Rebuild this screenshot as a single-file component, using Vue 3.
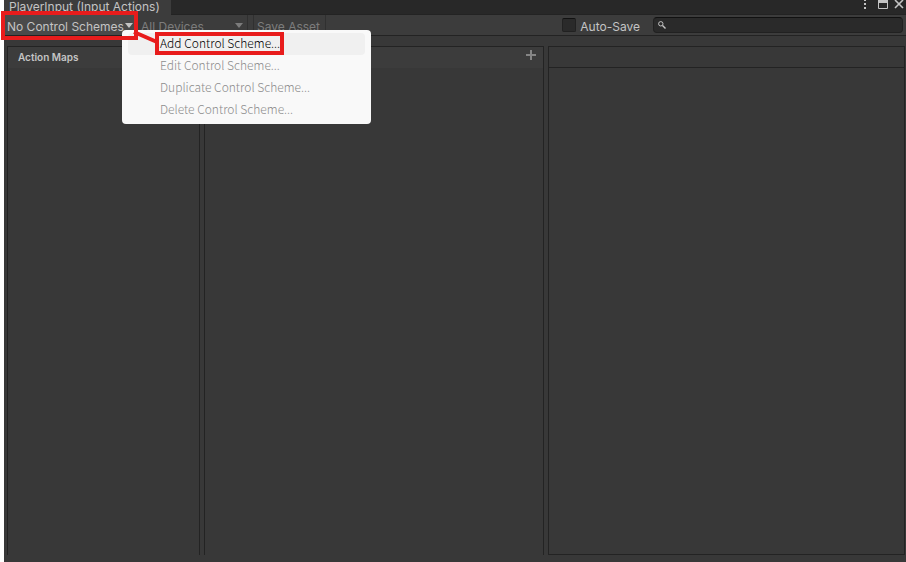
<script setup>
import { ref } from 'vue'

const scheme = ref('No Control Schemes')
const device = ref('All Devices')
const autoSave = ref(false)
const query = ref('')
const menuItems = [
  { label: 'Add Control Scheme...', enabled: true },
  { label: 'Edit Control Scheme...', enabled: false },
  { label: 'Duplicate Control Scheme...', enabled: false },
  { label: 'Delete Control Scheme...', enabled: false },
]
</script>

<template>
  <div class="window">
    <header class="titlebar">
      <div class="tab">PlayerInput (Input Actions)</div>
      <div class="window-buttons">
        <button class="icon-button" aria-label="More options">
          <svg width="8" height="12" viewBox="0 0 8 12" fill="#c4c4c4">
            <path d="M0 0h2v1H0zM0 3h2v2H0zM0 7h2v2H0z" />
          </svg>
        </button>
        <button class="icon-button" aria-label="Maximize">
          <svg width="10" height="12" viewBox="0 0 10 12" fill="none" stroke="#c4c4c4">
            <path d="M.5 0v8.500h9V0" />
            <path d="M0 1.500h10" stroke-width="3" />
          </svg>
        </button>
        <button class="icon-button" aria-label="Close">
          <svg width="10" height="12" viewBox="0 0 10 12" fill="none" stroke="#c4c4c4" stroke-width="1.600">
            <path d="M1 0l8 8M9 0L1 8" />
          </svg>
        </button>
      </div>
    </header>

    <div class="toolbar">
      <div class="dropdown schemes">
        <select v-model="scheme" aria-label="Control scheme">
          <option>No Control Schemes</option>
        </select>
        <svg class="arrow" width="8" height="5" viewBox="0 0 8 5"><path d="M0 0h8L4 5z" /></svg>
      </div>
      <div class="dropdown devices">
        <select v-model="device" aria-label="Devices" disabled>
          <option>All Devices</option>
        </select>
        <svg class="arrow" width="8" height="5" viewBox="0 0 8 5"><path d="M0 0h8L4 5z" /></svg>
      </div>
      <button class="save" disabled>Save Asset</button>
      <label class="auto-save">
        <input v-model="autoSave" type="checkbox" />
        <span>Auto-Save</span>
      </label>
      <div class="search">
        <svg width="8" height="8" viewBox="0 0 8 8" fill="none" stroke="#c4c4c4">
          <circle cx="2.800" cy="2.800" r="2.200" />
          <path d="M4.500 4.500L7.500 7.500" stroke-width="1.400" />
        </svg>
        <input v-model="query" type="text" aria-label="Search" />
      </div>
    </div>

    <main class="panels">
      <section class="panel maps">
        <h2 class="panel-head">Action Maps</h2>
      </section>
      <section class="panel actions">
        <div class="panel-head">
          <button class="icon-button" aria-label="Add action">
            <svg width="10" height="10" viewBox="0 0 10 10" stroke="#858585" stroke-width="2">
              <path d="M5 0v10M0 5h10" />
            </svg>
          </button>
        </div>
      </section>
      <section class="panel properties">
        <div class="panel-head"></div>
      </section>
    </main>

    <div class="menu" role="menu">
      <button
        v-for="item in menuItems"
        :key="item.label"
        class="menu-item"
        role="menuitem"
        :disabled="!item.enabled"
      >{{ item.label }}</button>
    </div>

    <svg class="annotation" width="290" height="60" viewBox="0 0 290 60" fill="none" stroke="#e81c1c" stroke-width="4">
      <rect x="3" y="13" width="133" height="25" />
      <rect x="157" y="34" width="125" height="19" />
      <path d="M134 32L157 42" />
    </svg>
  </div>
</template>

<style>
body {
  margin: 0;
  background: #fff;
}
</style>

<style scoped>
.window {
  position: relative;
  box-sizing: border-box;
  display: flex;
  flex-direction: column;
  min-height: 100vh;
  margin-left: 4px;
  background: #383838;
  color: #c4c4c4;
  font: 12px/20px Inter, sans-serif;
}
button,
input,
select {
  margin: 0;
  padding: 0;
  border: 0;
  background: none;
  color: inherit;
  font: inherit;
}
.titlebar {
  display: flex;
  justify-content: space-between;
  height: 14px;
  background: #282828;
  border-bottom: 1px solid #232323;
}
.tab {
  box-sizing: border-box;
  min-width: 167px;
  height: 15px;
  padding: 0 5px;
  line-height: 14px;
  white-space: nowrap;
  background: #3c3c3c;
}
.window-buttons {
  display: flex;
  gap: 6px;
  padding-right: 2px;
}
.icon-button {
  display: flex;
}
.toolbar {
  display: flex;
  height: 20px;
  padding-right: 3px;
  background: #3c3c3c;
  border-bottom: 1px solid #232323;
}
.dropdown {
  display: flex;
  align-items: center;
  box-sizing: border-box;
  border-right: 1px solid #303030;
}
.dropdown select {
  flex: 1;
  min-width: 0;
  height: 20px;
  padding-top: 2px;
  appearance: none;
  opacity: 1;
}
.arrow {
  flex: none;
  fill: currentColor;
}
.schemes {
  width: 133px;
  padding: 0 3px;
  background: #4a4a4a;
}
.devices {
  width: 111px;
  padding: 0 4px;
  color: #7c7c7c;
}
.save {
  margin-left: 5px;
  padding: 2px 5px 0 3px;
  border: solid #303030;
  border-width: 0 1px;
  color: #7c7c7c;
}
.auto-save {
  display: flex;
  align-items: center;
  gap: 4px;
  margin-left: auto;
}
.auto-save span {
  padding-top: 3px;
}
.auto-save input {
  box-sizing: border-box;
  width: 14px;
  height: 14px;
  appearance: none;
  background: #2a2a2a;
  border: 1px solid #212121;
  border-top-color: #111;
  border-radius: 2px;
}
.search {
  display: flex;
  align-items: center;
  box-sizing: border-box;
  flex: 0 1 250px;
  height: 16px;
  margin: 2px 0 0 13px;
  padding: 0 4px;
  gap: 4px;
  background: #2a2a2a;
  border: 1px solid #212121;
  border-top-color: #111;
  border-radius: 4px;
}
.search input {
  flex: 1;
  min-width: 0;
  height: 14px;
  outline: 0;
}
.panels {
  flex: 1;
  display: grid;
  grid-template-columns: 193px 340px 1fr;
  column-gap: 4px;
  padding: 10px 1px 7px 3px;
}
.panel {
  border: 1px solid #232323;
  border-bottom-width: 0;
}
.properties {
  border-bottom-width: 1px;
}
.panel-head {
  box-sizing: border-box;
  display: flex;
  height: 21px;
  margin: 0;
  padding: 0 10px;
  font-size: 10px;
  font-weight: 600;
  line-height: 21px;
  background: #3c3c3c;
}
.actions .panel-head {
  justify-content: flex-end;
  align-items: center;
  padding: 0 7px 5px;
}
.properties .panel-head {
  background: none;
  border-bottom: 1px solid #232323;
}
.menu {
  position: absolute;
  top: 30px;
  left: 118px;
  box-sizing: border-box;
  display: flex;
  flex-direction: column;
  width: 249px;
  padding: 3px 6px;
  background: #f9f9f9;
  border-radius: 4px;
}
.menu-item {
  height: 22px;
  padding: 0 0 2px 32px;
  border-radius: 4px;
  color: #000;
  font: 300 12px/20px "Noto Sans CJK KR", sans-serif;
  text-align: left;
}
.menu-item:first-child {
  background: #f0f0f0;
}
.menu-item:disabled {
  color: #8c8c8c;
}
.annotation {
  position: absolute;
  top: 0;
  left: -4px;
  pointer-events: none;
}
</style>
